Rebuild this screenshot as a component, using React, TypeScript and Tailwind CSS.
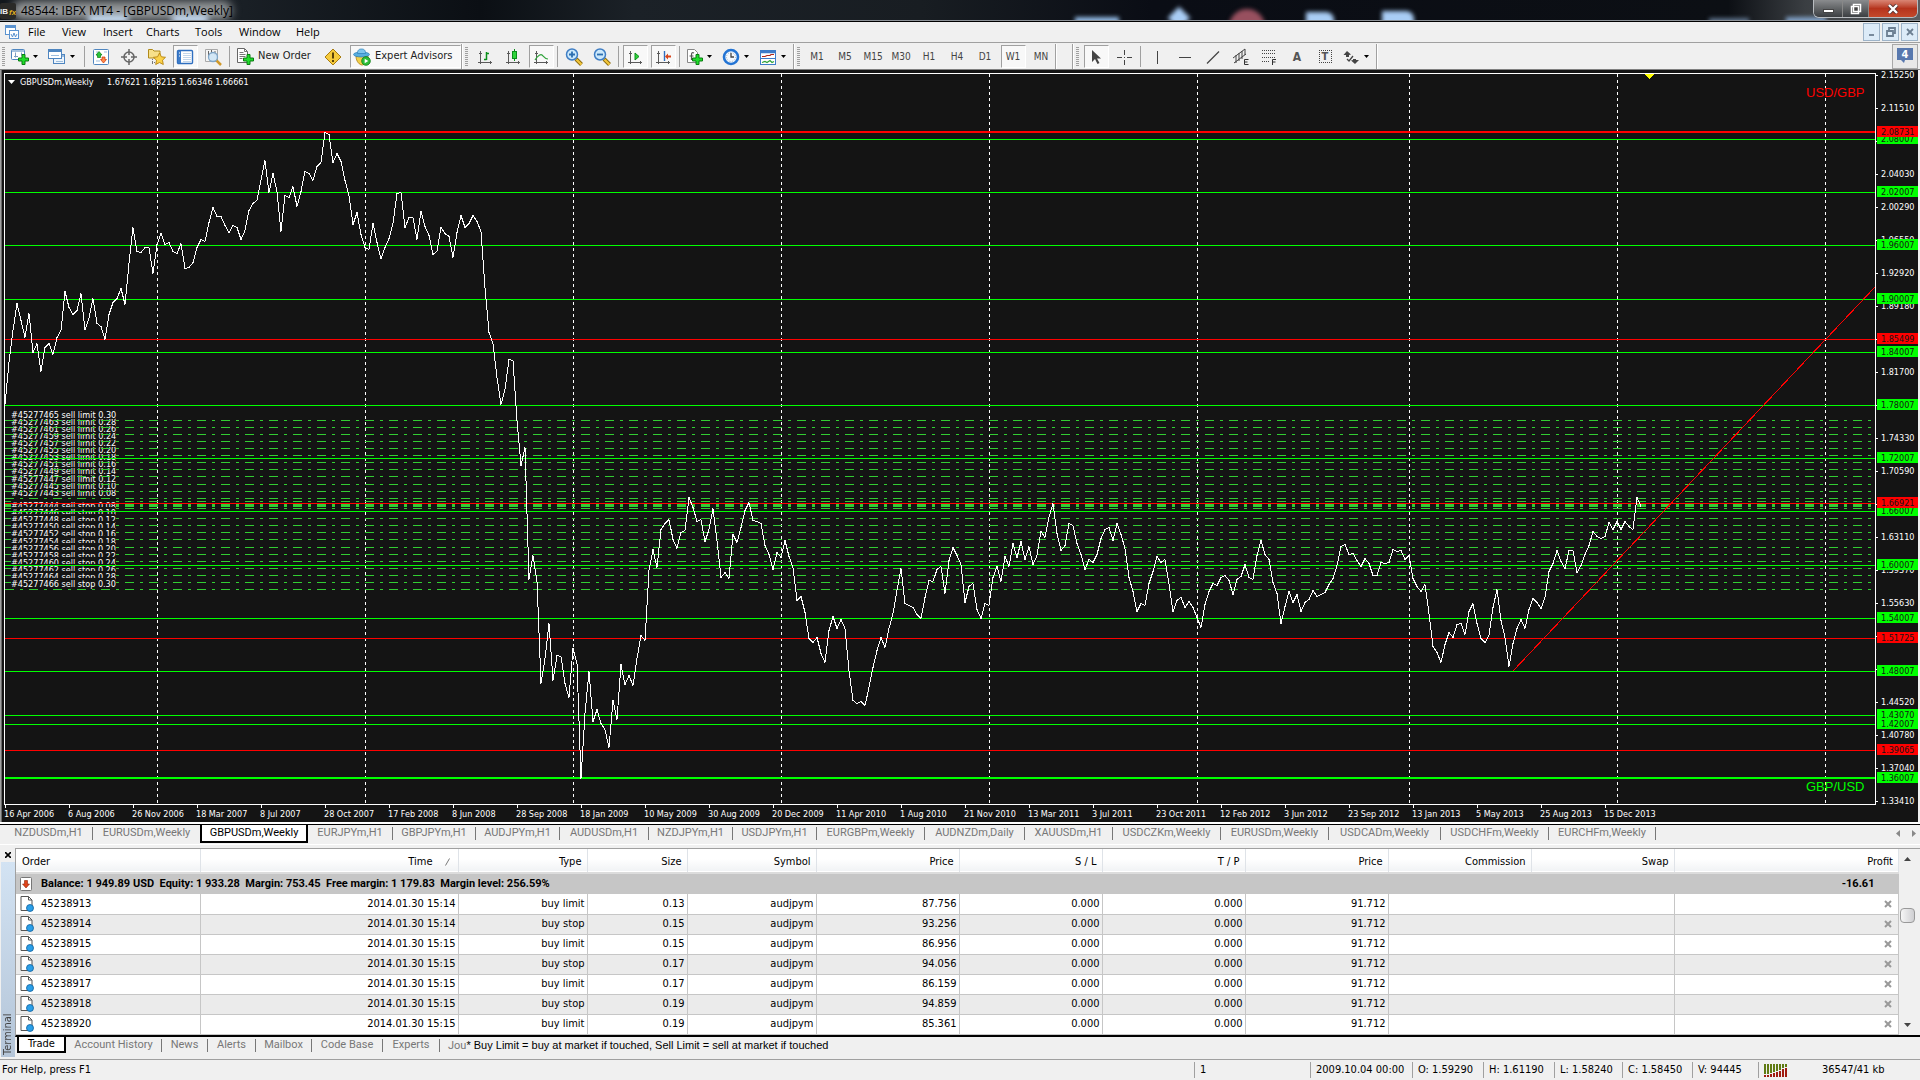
import type { ReactNode } from 'react';

type Level = { price: string; y: number; color: 'g' | 'r'; thick?: boolean };

const LEVELS: Level[] = [
  { price: '2.08007', y: 139, color: 'g' },
  { price: '2.08731', y: 132, color: 'r', thick: true },
  { price: '2.02007', y: 192, color: 'g' },
  { price: '1.96007', y: 245, color: 'g' },
  { price: '1.90007', y: 299, color: 'g' },
  { price: '1.84007', y: 352, color: 'g' },
  { price: '1.85499', y: 339, color: 'r' },
  { price: '1.78007', y: 405, color: 'g' },
  { price: '1.72007', y: 458, color: 'g' },
  { price: '1.66007', y: 511, color: 'g' },
  { price: '1.66921', y: 503, color: 'r' },
  { price: '1.60007', y: 565, color: 'g' },
  { price: '1.54007', y: 618, color: 'g' },
  { price: '1.51725', y: 638, color: 'r' },
  { price: '1.48007', y: 671, color: 'g' },
  { price: '1.42007', y: 724, color: 'g' },
  { price: '1.43070', y: 715, color: 'g' },
  { price: '1.39065', y: 750, color: 'r' },
  { price: '1.36007', y: 778, color: 'g', thick: true },
];

const SCALE: [string, number][] = [
  ['2.15250', 75], ['2.11510', 108], ['2.07770', 141], ['2.04030', 174], ['2.00290', 207],
  ['1.96550', 240], ['1.92920', 273], ['1.89180', 306], ['1.85440', 339], ['1.81700', 372],
  ['1.78060', 405], ['1.74330', 438], ['1.70590', 471], ['1.66850', 504], ['1.63110', 537],
  ['1.59370', 570], ['1.55630', 603], ['1.51890', 636], ['1.48150', 669], ['1.44520', 702],
  ['1.40780', 735], ['1.37040', 768], ['1.33410', 801],
];

// scale labels completely hidden under a level tag
const HIDDEN = ['2.07770', '1.85440', '1.78060', '1.66850', '1.51890', '1.48150'];

const DATES = [
  '16 Apr 2006', '6 Aug 2006', '26 Nov 2006', '18 Mar 2007', '8 Jul 2007', '28 Oct 2007', '17 Feb 2008',
  '8 Jun 2008', '28 Sep 2008', '18 Jan 2009', '10 May 2009', '30 Aug 2009', '20 Dec 2009', '11 Apr 2010',
  '1 Aug 2010', '21 Nov 2010', '13 Mar 2011', '3 Jul 2011', '23 Oct 2011', '12 Feb 2012', '3 Jun 2012',
  '23 Sep 2012', '13 Jan 2013', '5 May 2013', '25 Aug 2013', '15 Dec 2013',
];

const YEAR_LINES = [157, 365, 573, 781, 989, 1197, 1409, 1617, 1825];

// limits are painted bottom-up and stops top-down, so each label hides part of the one before
const ORDERS: [string, number][] = [
  ['#45277443 sell limit 0.08', 498],
  ['#45277445 sell limit 0.10', 491],
  ['#45277447 sell limit 0.12', 484],
  ['#45277449 sell limit 0.14', 476],
  ['#45277451 sell limit 0.16', 469],
  ['#45277453 sell limit 0.18', 462],
  ['#45277455 sell limit 0.20', 455],
  ['#45277457 sell limit 0.22', 448],
  ['#45277459 sell limit 0.24', 441],
  ['#45277461 sell limit 0.26', 434],
  ['#45277463 sell limit 0.28', 427],
  ['#45277465 sell limit 0.30', 420],
  ['#45277444 sell stop 0.08', 511],
  ['#45277446 sell stop 0.10', 518],
  ['#45277448 sell stop 0.12', 525],
  ['#45277450 sell stop 0.14', 532],
  ['#45277452 sell stop 0.16', 539],
  ['#45277454 sell stop 0.18', 547],
  ['#45277456 sell stop 0.20', 554],
  ['#45277458 sell stop 0.22', 561],
  ['#45277460 sell stop 0.24', 568],
  ['#45277462 sell stop 0.26', 575],
  ['#45277464 sell stop 0.28', 582],
  ['#45277466 sell stop 0.30', 589],
];

// one close per week, 4px apart
const CLOSES = [
  404, 362, 330, 303, 320, 337, 313, 352, 343, 371, 347, 343, 354, 337, 330, 291, 307, 314, 310, 293,
  329, 318, 298, 323, 326, 339, 314, 302, 298, 288, 304, 263, 227, 251, 252, 247, 247, 273, 244, 233,
  244, 242, 251, 253, 243, 268, 267, 262, 247, 239, 241, 222, 207, 216, 216, 225, 232, 225, 227, 239,
  230, 210, 203, 200, 180, 160, 192, 173, 191, 231, 195, 197, 186, 206, 191, 171, 173, 180, 166, 162,
  132, 134, 162, 153, 161, 180, 195, 224, 212, 234, 247, 249, 223, 242, 258, 247, 238, 223, 193, 192,
  227, 217, 217, 239, 211, 226, 235, 254, 251, 227, 233, 236, 257, 232, 215, 227, 223, 215, 221, 231,
  287, 332, 343, 377, 404, 389, 359, 360, 420, 465, 447, 579, 555, 581, 683, 658, 623, 680, 655, 656,
  683, 697, 648, 663, 778, 713, 671, 721, 709, 723, 729, 747, 700, 719, 664, 684, 675, 685, 658, 635,
  640, 570, 549, 567, 529, 523, 519, 539, 548, 532, 530, 497, 507, 521, 519, 541, 529, 508, 540, 577,
  572, 578, 534, 542, 527, 510, 502, 520, 521, 523, 545, 554, 569, 552, 557, 540, 556, 567, 600, 596,
  612, 638, 642, 637, 653, 662, 630, 616, 628, 619, 628, 670, 700, 703, 701, 705, 687, 667, 650, 637,
  647, 628, 613, 590, 568, 603, 605, 607, 614, 618, 597, 580, 581, 569, 566, 593, 560, 547, 555, 564,
  602, 586, 583, 609, 618, 603, 605, 577, 566, 581, 556, 566, 543, 557, 541, 559, 546, 564, 555, 531,
  537, 517, 503, 533, 550, 545, 523, 525, 543, 554, 569, 559, 562, 554, 538, 529, 527, 540, 523, 534,
  548, 577, 591, 611, 603, 605, 583, 571, 556, 562, 559, 583, 611, 600, 597, 607, 601, 607, 617, 627,
  604, 591, 583, 585, 577, 575, 580, 594, 579, 576, 564, 577, 579, 555, 540, 554, 559, 582, 593, 623,
  606, 591, 602, 594, 611, 602, 599, 590, 596, 594, 592, 584, 578, 565, 546, 544, 554, 553, 560, 566,
  558, 563, 575, 575, 562, 563, 562, 549, 551, 550, 559, 555, 578, 586, 591, 584, 613, 646, 652, 662,
  644, 632, 637, 624, 623, 634, 611, 603, 623, 638, 642, 635, 607, 589, 620, 637, 666, 643, 628, 619,
  628, 609, 598, 602, 608, 597, 571, 563, 550, 561, 568, 550, 550, 572, 565, 554, 545, 531, 536, 538,
  536, 522, 529, 521, 529, 521, 526, 529, 497, 506,
];

const CHART_TABS = [
  { label: 'NZDUSDm,H1', w: 'w-[88px]' },
  { label: 'EURUSDm,Weekly', w: 'w-[107px]' },
  { label: 'GBPUSDm,Weekly', w: 'w-[108px]' },
  { label: 'EURJPYm,H1', w: 'w-[85px]' },
  { label: 'GBPJPYm,H1', w: 'w-[83px]' },
  { label: 'AUDJPYm,H1', w: 'w-[84px]' },
  { label: 'AUDUSDm,H1', w: 'w-[89px]' },
  { label: 'NZDJPYm,H1', w: 'w-[84px]' },
  { label: 'USDJPYm,H1', w: 'w-[84px]' },
  { label: 'EURGBPm,Weekly', w: 'w-[108px]' },
  { label: 'AUDNZDm,Daily', w: 'w-[100px]' },
  { label: 'XAUUSDm,H1', w: 'w-[88px]' },
  { label: 'USDCZKm,Weekly', w: 'w-[108px]' },
  { label: 'EURUSDm,Weekly', w: 'w-[108px]' },
  { label: 'USDCADm,Weekly', w: 'w-[112px]' },
  { label: 'USDCHFm,Weekly', w: 'w-[108px]' },
  { label: 'EURCHFm,Weekly', w: 'w-[107px]' },
];

const TERMINAL_TABS = [
  { label: 'Account History', w: 'w-[96px]' },
  { label: 'News', w: 'w-[46px]' },
  { label: 'Alerts', w: 'w-[48px]' },
  { label: 'Mailbox', w: 'w-[56px]' },
  { label: 'Code Base', w: 'w-[71px]' },
  { label: 'Experts', w: 'w-[57px]' },
];

const COLUMNS = [
  { label: 'Order', w: 'w-[184px]' },
  { label: 'Time', w: 'w-[258px]' },
  { label: 'Type', w: 'w-[129px]' },
  { label: 'Size', w: 'w-[100px]' },
  { label: 'Symbol', w: 'w-[129px]' },
  { label: 'Price', w: 'w-[143px]' },
  { label: 'S / L', w: 'w-[143px]' },
  { label: 'T / P', w: 'w-[143px]' },
  { label: 'Price', w: 'w-[143px]' },
  { label: 'Commission', w: 'w-[143px]' },
  { label: 'Swap', w: 'w-[143px]' },
  { label: 'Profit', w: '' },
];

const ROWS = [
  ['45238913', '2014.01.30 15:14', 'buy limit', '0.13', '87.756'],
  ['45238914', '2014.01.30 15:14', 'buy stop', '0.15', '93.256'],
  ['45238915', '2014.01.30 15:15', 'buy limit', '0.15', '86.956'],
  ['45238916', '2014.01.30 15:15', 'buy stop', '0.17', '94.056'],
  ['45238917', '2014.01.30 15:15', 'buy limit', '0.17', '86.159'],
  ['45238918', '2014.01.30 15:15', 'buy stop', '0.19', '94.859'],
  ['45238920', '2014.01.30 15:15', 'buy limit', '0.19', '85.361'],
];

const STATUS = [
  { label: '1', w: 'w-[116px]' },
  { label: '2009.10.04 00:00', w: 'w-[102px]' },
  { label: 'O: 1.59290', w: 'w-[71px]' },
  { label: 'H: 1.61190', w: 'w-[71px]' },
  { label: 'L: 1.58240', w: 'w-[68px]' },
  { label: 'C: 1.58450', w: 'w-[70px]' },
  { label: 'V: 94445', w: 'w-[66px]' },
];

/* ── Toolbar parts ─────────────────────────────────────────── */

function Grip() {
  return (
    <span className="mr-[3px] ml-[2px] h-5 w-[3px] shrink-0 bg-[repeating-linear-gradient(to_bottom,#a0a0a0_0_1px,#f0f0f0_1px_2px)]" />
  );
}

function Sep() {
  return <span className="mx-[2px] h-[21px] w-px shrink-0 bg-[#a0a0a0]" />;
}

function BarEnd() {
  return <span className="h-full w-[2px] shrink-0 border-l border-[#a0a0a0] bg-white" />;
}

const PRESSED = 'border-t-[#a0a0a0] border-l-[#a0a0a0] border-r-white border-b-white bg-[#f8f8f8]';

function Tool({ label, children, pressed }: { label: string; children: ReactNode; pressed?: boolean }) {
  return (
    <button type="button" aria-label={label} className="flex h-[23px] w-7 shrink-0 items-center justify-center">
      <span className={`flex h-[23px] w-[25px] items-center justify-center border ${pressed ? PRESSED : 'border-transparent'}`}>
        {children}
      </span>
    </button>
  );
}

function DropTool({ label, children }: { label: string; children: ReactNode }) {
  return (
    <button type="button" aria-label={label} className="flex h-[23px] w-[37px] shrink-0 items-center gap-1 pl-[3px]">
      {children}
      <Caret />
    </button>
  );
}

function Caret() {
  return <svg width="5" height="3" className="shrink-0"><path d="M0 0h5L2.5 3z" fill="#000" /></svg>;
}

function Icon({ children }: { children: ReactNode }) {
  return <svg width="18" height="18" viewBox="0 0 18 18" fill="none" className="shrink-0">{children}</svg>;
}

const Plus = () => (
  <path transform="translate(7 6)" d="M4 .5h3V4h3.500v3H7v3.500H4V7H.5V4H4z" fill="#1fdc2b" stroke="#0a7d12" />
);

const Axes = () => (
  <g stroke="#5a5a5a">
    <path d="M4.500 3v13M2 14.500h14" />
    <path d="M3 5.500h3M14.500 13v3" />
  </g>
);

function Glass({ minus }: { minus?: boolean }) {
  return (
    <Icon>
      <path d="M11 11l5.500 5.500" stroke="#8a6a10" strokeWidth="4" />
      <path d="M11.500 11.500l5 5" stroke="#f3c73c" strokeWidth="2.200" />
      <circle cx="7" cy="6.500" r="5.500" fill="#cbe8fb" stroke="#3f7ec4" strokeWidth="1.500" />
      <path d={minus ? 'M4 6.500h6' : 'M4 6.500h6M7 3.500v6'} stroke="#2d6fb0" strokeWidth="1.800" />
    </Icon>
  );
}

function Toolbar() {
  return (
    <div className="flex h-[27px] items-center border-b border-[#808080] bg-[#f0f0f0] text-[11px] text-[#222]">
      <div className="flex h-full items-center pt-px">
        <Grip />
        <DropTool label="New chart">
          <Icon>
            <rect x=".5" y="1.500" width="13" height="10" rx="1" fill="#fff" stroke="#4f86c0" />
            <path d="M1 3h12" stroke="#4f86c0" />
            <path d="M4.500 4.500v5M3 8.500h4M10.500 4.500v3" stroke="#7b9cc0" />
            <Plus />
          </Icon>
        </DropTool>
        <DropTool label="Profiles">
          <Icon>
            <rect x="5.500" y="6.500" width="11" height="9" fill="#eef5fc" stroke="#4f86c0" />
            <path d="M6 8h10" stroke="#4f86c0" />
            <path d="M8 13.500h7" stroke="#9dbddd" />
            <rect x=".5" y="1.500" width="13" height="9" fill="#fff" stroke="#4f86c0" />
            <path d="M1 3h12" stroke="#4f86c0" strokeWidth="2" />
            <path d="M3 7.500h8" stroke="#9dbddd" />
          </Icon>
        </DropTool>
        <Sep />
        <Tool label="Market Watch">
          <Icon>
            <rect x="1.500" y="1.500" width="15" height="15" rx="1" fill="#fff" stroke="#4f86c0" />
            <path d="M4 4h2M4 7h1M4 13h4M12 4h3" stroke="#9dbddd" />
            <path d="M7 3.500l3 3.500H8.500v2.500h-3V7H4z" fill="#27c43a" stroke="#0a7d12" strokeWidth=".7" />
            <path d="M11.500 15l3-3.500H13V9h-3v2.500H8.500z" fill="#ff8a4a" stroke="#c8320a" strokeWidth=".7" />
          </Icon>
        </Tool>
        <Tool label="Data Window">
          <Icon>
            <circle cx="9" cy="9" r="5" stroke="#666" strokeWidth="1.500" />
            <path d="M9 1v6M9 11v6M1 9h6M11 9h6" stroke="#666" strokeWidth="1.500" />
          </Icon>
        </Tool>
        <Tool label="Navigator">
          <Icon>
            <path d="M.5 3V1.500h4L6 3h6v7H.5z" fill="#f7e08a" stroke="#b08a1a" />
            <path d="M4.500 11v5M7 14.500H4" stroke="#777" strokeDasharray="1 1" />
            <path d="M11.500 5l1.900 3.800 4.100.5-3 2.900.8 4.300-3.800-2-3.800 2 .8-4.300-3-2.900 4.100-.5z" fill="#fbd24a" stroke="#b5830c" strokeWidth=".9" />
          </Icon>
        </Tool>
        <Tool label="Terminal" pressed>
          <Icon>
            <rect x="1.500" y="2.500" width="15" height="13" rx="1" fill="#fff" stroke="#2f6fc0" strokeWidth="1.400" />
            <rect x="2" y="3" width="3" height="12" fill="#3d7cc9" />
            <path d="M7 5.500h8M7 7.500h8M7 9.500h8M7 11.500h8M7 13.500h8" stroke="#c3d6ea" />
            <path d="M3 5h1M3 8h1" stroke="#fff" />
          </Icon>
        </Tool>
        <Tool label="Strategy Tester">
          <Icon>
            <path d="M1.500 1.500h12v12h-12z" fill="#f4f4f4" stroke="#a9a9a9" />
            <path d="M4.500 3v5M7.500 2v4M11 3v4" stroke="#666" />
            <path d="M12 12l5 5" stroke="#d0992a" strokeWidth="2.500" />
            <circle cx="9" cy="9" r="4.500" fill="#cfe5f6" fillOpacity=".9" stroke="#7fa6c8" strokeWidth="1.300" />
          </Icon>
        </Tool>
        <Sep />
        <button type="button" className="flex h-[23px] w-[87px] shrink-0 items-center gap-1 pl-1">
          <Icon>
            <path d="M1.500.5h7l3 3v11h-10z" fill="#fff" stroke="#666" />
            <path d="M8.500.5v3h3M3.500 4.500h4M3.500 6.500h6M3.500 8.500h6M3.500 10.500h3" stroke="#777" />
            <Plus />
          </Icon>
          <span className="whitespace-nowrap">New Order</span>
        </button>
        <Tool label="MetaEditor">
          <Icon>
            <path d="M9 1l8 8-8 8-8-8z" fill="#f6cb3c" stroke="#a97c10" />
            <path d="M9 4.500v6M9 12v2" stroke="#5a4208" strokeWidth="2" />
          </Icon>
        </Tool>
        <button type="button" className={`ml-[3px] flex h-[23px] w-[111px] shrink-0 items-center gap-1 border pl-[2px] ${PRESSED}`}>
          <Icon>
            <path d="M3 8c0 6 4 9 6 9s6-3 6-9z" fill="#f2d04a" stroke="#a97c10" strokeWidth=".8" />
            <ellipse cx="8.500" cy="6.500" rx="8" ry="2.500" fill="#58aee0" stroke="#2a7db5" strokeWidth=".7" />
            <path d="M4.500 5.500C4.500 2 6 1 8.500 1s4 1 4 4.500z" fill="#7fc6ee" stroke="#2a7db5" strokeWidth=".7" />
            <circle cx="13" cy="13" r="4.300" fill="#2fbf3a" stroke="#0a7d12" strokeWidth=".8" />
            <path d="M11.700 10.800v4.400l3.600-2.200z" fill="#fff" />
          </Icon>
          <span className="whitespace-nowrap">Expert Advisors</span>
        </button>
        <BarEnd />
      </div>

      <div className="flex h-full items-center pt-px">
        <Grip />
        <Tool label="Bar chart"><Icon><Axes /><path d="M10.500 4v8M8 11.500h2.500M10.500 5.500H13" stroke="#0a8f1a" strokeWidth="1.500" /></Icon></Tool>
        <Tool label="Candlesticks"><Icon><Axes /><path d="M10.500 1v12" stroke="#0a8f1a" /><rect x="8.500" y="3.500" width="4" height="7" fill="#2fd43a" stroke="#0a8f1a" /></Icon></Tool>
        <Tool label="Line chart" pressed><Icon><Axes /><path d="M3 12c3-5 6-6 7-5s3 4 6 4" stroke="#2fa33a" strokeWidth="1.200" /></Icon></Tool>
        <Sep />
        <Tool label="Zoom In"><Glass /></Tool>
        <Tool label="Zoom Out"><Glass minus /></Tool>
        <Sep />
        <Tool label="Auto Scroll" pressed><Icon><Axes /><path d="M9 5v7l4-3.500z" fill="#2fd43a" stroke="#0a8f1a" /></Icon></Tool>
        <Tool label="Chart Shift" pressed><Icon><Axes /><path d="M10.500 3v10" stroke="#2f6fc0" strokeWidth="1.400" /><path d="M11 8.500l3-3v2h3v2h-3v2z" fill="#d8441a" /></Icon></Tool>
        <Sep />
        <DropTool label="Indicators">
          <Icon>
            <path d="M2.500 1.500h7l3 3v10h-10z" fill="#fff" stroke="#888" />
            <path d="M9 5c-2-1-2.500 0-2.500 2v5M4.500 8h4" stroke="#555" strokeWidth="1.200" />
            <Plus />
          </Icon>
        </DropTool>
        <DropTool label="Periods">
          <Icon>
            <circle cx="9" cy="9" r="7" fill="#f4f9fe" stroke="#2374d4" strokeWidth="2.600" />
            <circle cx="9" cy="9" r="4.500" stroke="#9ab" strokeDasharray="1 1.500" />
            <path d="M9 5v4h3" stroke="#444" strokeWidth="1.300" />
          </Icon>
        </DropTool>
        <DropTool label="Templates">
          <Icon>
            <rect x="1.500" y="2.500" width="15" height="14" fill="#fff" stroke="#3d7cc9" />
            <path d="M2 4h14" stroke="#3d7cc9" strokeWidth="2.500" />
            <path d="M2 10.500h14" stroke="#3d7cc9" />
            <path d="M3 8.500h3l2-1h3l1-1h3" stroke="#b0281a" strokeWidth="1.200" />
            <path d="M3 14.500l3-1 2 1 3-2 2 2 2-1" stroke="#2fa33a" strokeWidth="1.200" />
          </Icon>
        </DropTool>
        <BarEnd />
      </div>

      <div className="flex h-full items-center pt-px text-[10px] text-[#444]">
        <Grip />
        {['M1', 'M5', 'M15', 'M30', 'H1', 'H4', 'D1', 'W1', 'MN'].map(p => (
          <Tool key={p} label={p} pressed={p === 'W1'}>{p}</Tool>
        ))}
        <BarEnd />
      </div>

      <div className="ml-[15px] flex h-full items-center pt-px">
        <BarEnd />
        <Grip />
        <Tool label="Cursor" pressed><Icon><path d="M5 2v12l3-3 2.500 5 2-1L10 10.500h4z" fill="#444" /></Icon></Tool>
        <Tool label="Crosshair"><Icon><path d="M9.500 2v5M9.500 12v5M2 9.500h5M12 9.500h5M9 9.500h1" stroke="#444" /></Icon></Tool>
        <Sep />
        <Tool label="Vertical line"><Icon><path d="M9.500 3v13" stroke="#444" /></Icon></Tool>
        <Tool label="Horizontal line"><Icon><path d="M3 9.500h12" stroke="#444" /></Icon></Tool>
        <Tool label="Trendline"><Icon><path d="M3 15.500L15 3.500" stroke="#444" strokeWidth="1.200" /></Icon></Tool>
        <Tool label="Equidistant channel">
          <Icon>
            <path d="M1 10L13 1M2 15L14 6M4 7v8M7 5v8M10 3v8M13 1v6" stroke="#444" />
            <path d="M16.500 11.500h-4v5h4M12.500 14h3" stroke="#333" />
          </Icon>
        </Tool>
        <Tool label="Fibonacci">
          <Icon>
            <path d="M2 2.500h14M2 5.500h14M2 9.500h14M2 13.500h8" stroke="#444" strokeDasharray="1 1" />
            <path d="M16 11.500h-3.500V17M12.500 14h3" stroke="#333" />
          </Icon>
        </Tool>
        <Tool label="Text"><span className="text-[12px] font-bold text-[#555]">A</span></Tool>
        <Tool label="Text label">
          <span className="flex h-[13px] w-[13px] items-center justify-center border border-dotted border-[#444] text-[11px] leading-3 font-bold text-[#555]">T</span>
        </Tool>
        <DropTool label="Arrows">
          <Icon>
            <path d="M5 3l4 3.500-2 .5v2H4V7H1.500z" fill="#444" />
            <path d="M13 16l-4-3.500 2-.5v-1h3v1h3z" fill="#444" />
            <path d="M5 11l2 2 4-5" stroke="#444" strokeWidth="1.300" />
          </Icon>
        </DropTool>
        <BarEnd />
      </div>

      <button type="button" aria-label="Messages: 4" className="mr-[2px] ml-auto flex h-[25px] w-[26px] items-center justify-center border border-[#a8a8a8] bg-[#e8e8e8]">
        <svg width="18" height="18" viewBox="0 0 18 18">
          <path d="M1 1h16v12H9l-1 3-3-3H1z" fill="#5878ae" />
          <text x="9" y="11" textAnchor="middle" fontSize="11" fontWeight="bold" fill="#fff">4</text>
        </svg>
      </button>
    </div>
  );
}

/* ── Window frame ──────────────────────────────────────────── */

function TitleBar() {
  return (
    <header className="relative flex h-[22px] items-start overflow-hidden border-b border-black bg-[linear-gradient(to_right,#12171c_0%,#1a2026_12%,#0b0f14_25%,#1b2127_33%,#181d22_48%,#0a0d15_60%,#0c0f14_90%,#3a3e42_94%,#5a5d60_100%)]">
      <div className="absolute top-[1px] left-3 h-[19px] w-[220px] rounded-full bg-[#95989a] blur-[5px]" />
      <div className="absolute top-[15px] left-[88px] h-2 w-10 bg-[#cfe6ff] blur-[3px]" />
      <div className="absolute top-[15px] left-[172px] h-2 w-9 bg-[#cfe6ff] blur-[3px]" />
      <div className="absolute top-[17px] left-[56%] h-2 w-11 bg-[#8fb6e0] blur-[2px]" />
      <div className="absolute top-[10px] left-[61%] h-4 w-4 rotate-45 bg-[#a9cdf5] blur-[2px]" />
      <div className="absolute top-[9px] left-[64%] h-9 w-9 rounded-full bg-[#98505f] blur-[2px]" />
      <div className="absolute top-[12px] left-[68%] h-4 w-7 rounded-tr-lg bg-[#a9cdf5] blur-[2px]" />
      <div className="absolute top-[11px] left-[72%] h-4 w-8 rounded-tr-lg bg-[#a9cdf5] blur-[2px]" />
      <div className="absolute top-[18px] left-[89%] h-2 w-10 bg-[#5c7088] blur-[2px]" />
      <div className="absolute top-[17px] left-[93%] h-2 w-10 bg-[#7f9fc4] blur-[2px]" />
      <div className="absolute inset-x-0 bottom-0 h-px bg-[#8d9298]" />
      <div className="relative flex h-full w-full items-start">
        <svg width="16" height="16" viewBox="0 0 16 16" className="mt-[3px] shrink-0" fontFamily="'Liberation Sans', sans-serif">
          <rect width="16" height="16" rx="2" fill="#2a2a28" />
          <text x="0" y="11" fontSize="8" fontWeight="bold" fill="#eee">IB</text>
          <text x="9" y="12" fontSize="8" fontStyle="italic" fontWeight="bold" fill="#e0b020">fx</text>
        </svg>
        <h1 className="ml-[5px] font-['Open_Sans',sans-serif] text-[12px] leading-[21px] whitespace-nowrap text-black">
          48544: IBFX MT4 - [GBPUSDm,Weekly]
        </h1>
        <div className="mr-[2px] ml-auto flex h-[18px] overflow-hidden rounded-b-md border border-t-0 border-[#b8bcc0]">
          <button type="button" aria-label="Minimize" className="flex w-[29px] items-end justify-center border-r border-[#888] bg-linear-to-b from-[#8a8c8e] to-[#3c3f42] pb-1">
            <span className="h-[4px] w-[11px] border border-[#444] bg-white" />
          </button>
          <button type="button" aria-label="Restore" className="flex w-[26px] items-center justify-center border-r border-[#888] bg-linear-to-b from-[#8a8c8e] to-[#3c3f42]">
            <svg width="12" height="12" viewBox="0 0 12 12"><path d="M3.500 1.500h7v7h-7zM1.500 3.500h7v7h-7z" fill="#444" stroke="#fff" strokeWidth="1.500" /></svg>
          </button>
          <button type="button" aria-label="Close" className="flex w-[48px] items-center justify-center bg-linear-to-b from-[#d98574] via-[#b5331c] to-[#c4492a]">
            <svg width="12" height="10" viewBox="0 0 12 10"><path d="M2 1l8 8M10 1L2 9" stroke="#533" strokeWidth="4" /><path d="M2 1l8 8M10 1L2 9" stroke="#fff" strokeWidth="2.400" /></svg>
          </button>
        </div>
      </div>
    </header>
  );
}

function MenuBar() {
  return (
    <nav className="flex h-[21px] items-center border-b border-[#a0a0a0] bg-[#f0f0f0] pl-[5px] font-['Open_Sans',sans-serif] text-[11px] text-black">
      <svg width="14" height="14" viewBox="0 0 14 14" fill="none" className="shrink-0">
        <rect x=".5" y=".5" width="10" height="9" fill="#fff" stroke="#5b93d0" />
        <path d="M1 2h9" stroke="#5b93d0" strokeWidth="2" />
        <rect x="4.500" y="5.500" width="9" height="8" fill="#fff" stroke="#5b93d0" />
        <path d="M6 9l1.500 3L9 8l1.500 4L12 9" stroke="#5b93d0" />
      </svg>
      <ul className="ml-[9px] flex">
        {[
          { label: 'File', w: 'w-[34px]' },
          { label: 'View', w: 'w-[41px]' },
          { label: 'Insert', w: 'w-[43px]' },
          { label: 'Charts', w: 'w-[49px]' },
          { label: 'Tools', w: 'w-[44px]' },
          { label: 'Window', w: 'w-[57px]' },
          { label: 'Help', w: 'w-[40px]' },
        ].map(m => (
          <li key={m.label} className={m.w}><button type="button">{m.label}</button></li>
        ))}
      </ul>
      <div className="mr-[2px] ml-auto flex gap-[2px]">
        {[
          { label: 'Minimize chart', d: 'M2 8h5' },
          { label: 'Restore chart', d: 'M3 3V1h6v5H7M1 4h6v5H1z' },
          { label: 'Close chart', d: 'M2 2l6 6M8 2L2 8' },
        ].map(b => (
          <button key={b.label} type="button" aria-label={b.label} className="flex h-[18px] w-[17px] items-center justify-center border border-[#9db3c8] bg-[#dcebf8]">
            <svg width="10" height="10" viewBox="0 0 10 10" fill="none"><path d={b.d} stroke="#6c7f92" strokeWidth="1.800" /></svg>
          </button>
        ))}
      </div>
    </nav>
  );
}

/* ── Chart ─────────────────────────────────────────────────── */

const HEX = { g: '#00ff00', r: '#ff0000' };
const DASH = '9 6 3 6';

function Chart() {
  const points = CLOSES.map((y, i) => `${5 + i * 4},${y + 0.5}`).join(' ');
  return (
    <div className="border-b-2 border-white bg-[#141414]">
      <svg viewBox="0 70 1920 752" className="block h-auto w-full" fontFamily="'DejaVu Sans Condensed', 'DejaVu Sans', sans-serif" fontSize="9">
        <rect x="0" y="70" width="1920" height="752" fill="#141414" />
        <rect x="0" y="70" width="1" height="752" fill="#a0a0a0" />
        <rect x="1" y="70" width="1" height="752" fill="#696969" />
        <rect x="1918" y="70" width="2" height="752" fill="#f0f0f0" />

        <g shapeRendering="crispEdges">
          {YEAR_LINES.map(x => (
            <path key={x} d={`M${x + 0.5} 74V804`} stroke="#fff" strokeDasharray="3 3" />
          ))}
          {[501, 508].map(y => <path key={y} d={`M5 ${y + 0.5}H1875`} stroke="#32cd32" strokeDasharray={DASH} />)}
          <path d="M5 505.500H1875" stroke="#32cd32" strokeWidth="3" strokeDasharray={DASH} />
        </g>

        {ORDERS.map(([label, y]) => (
          <g key={label}>
            {y !== 511 && (
              <path d={`M5 ${y + 0.5}H1875`} stroke="#32cd32" strokeDasharray={DASH} shapeRendering="crispEdges" />
            )}
            <rect x="11" y={y - 11} width="104" height="10" fill="#141414" />
            <text x="11" y={y - 2} fill="#fff">{label}</text>
          </g>
        ))}

        <g shapeRendering="crispEdges">
          {LEVELS.map(l => (
            <rect key={l.price} x="5" y={l.thick ? l.y - 1 : l.y} width="1870" height={l.thick ? 2 : 1} fill={HEX[l.color]} />
          ))}
          <path d="M1513 671L1875 287" stroke="#ff0000" />
          <polyline points={points} fill="none" stroke="#fff" />
          <path d="M4.500 804V73.500H1875.500V804.500H4" fill="none" stroke="#fff" />
          <path d="M1645 74h9l-4.500 5z" fill="#ffff00" />
        </g>

        <path d="M8 80h7l-3.500 4z" fill="#fff" />
        <text x="20" y="85" fill="#fff">GBPUSDm,Weekly</text>
        <text x="107" y="85" fill="#fff">1.67621 1.68215 1.66346 1.66661</text>
        <g fontFamily="'Liberation Sans', sans-serif" fontSize="13">
          <text x="1806" y="97" fill="#ff0000">USD/GBP</text>
          <text x="1806" y="791" fill="#00ff00">GBP/USD</text>
        </g>

        {SCALE.map(([p, y]) => (
          <g key={p}>
            <rect x="1876" y={y} width="2" height="1" fill="#fff" />
            {!HIDDEN.includes(p) && <text x="1881" y={y + 3} fill="#fff">{p}</text>}
          </g>
        ))}
        {LEVELS.map(l => (
          <g key={l.price}>
            <rect x="1877" y={l.y - 6} width="41" height="11" fill={HEX[l.color]} />
            <text x="1881" y={l.y + 3} fill="#141414">{l.price}</text>
          </g>
        ))}
        {DATES.map((d, i) => (
          <g key={d}>
            <rect x={5 + i * 64} y="805" width="1" height="3" fill="#fff" />
            <text x={4 + i * 64} y="817" fill="#fff">{d}</text>
          </g>
        ))}
      </svg>
    </div>
  );
}

function ChartTabs() {
  return (
    <div className="flex h-[21px] items-start border-t border-b border-t-black border-b-white pl-[5px] font-['Roboto',sans-serif] text-[11px] text-[#777]">
      {CHART_TABS.map((t, i) => {
        const active = i === 2;
        return (
          <button
            key={i}
            type="button"
            className={`flex shrink-0 items-center justify-center whitespace-nowrap ${t.w} ${active ? 'h-[18px] border-x-2 border-b-2 border-black bg-white text-black' : 'h-[17px]'}`}
          >
            <span className={`flex h-[13px] w-full items-center justify-center ${active || i === 1 ? '' : 'border-r border-[#777]'}`}>{t.label}</span>
          </button>
        );
      })}
      <div className="mt-[5px] mr-1 ml-auto flex gap-3">
        <svg width="4" height="7"><path d="M4 0v7L0 3.500z" fill="#888" /></svg>
        <svg width="4" height="7"><path d="M0 0v7l4-3.500z" fill="#888" /></svg>
      </div>
    </div>
  );
}

/* ── Terminal ──────────────────────────────────────────────── */

function OrderIcon() {
  return (
    <svg width="14" height="16" viewBox="0 0 14 16" className="shrink-0">
      <path d="M1 .5h7.500L12 4v10.500H1z" fill="#fff" stroke="#555" />
      <path d="M8.500.5V4H12" fill="none" stroke="#555" />
      <circle cx="10" cy="12" r="3.500" fill="#2a9fe8" stroke="#0f5f9c" strokeWidth=".8" />
    </svg>
  );
}

function OrdersTable() {
  return (
    <table className="w-full table-fixed border-collapse">
      <thead>
        <tr className="h-6 border-b-2 border-[#dcdcdc] bg-linear-to-b from-white from-45% to-[#f1f3f5]">
          {COLUMNS.map((c, i) => (
            <th key={i} scope="col" className={`border-r border-[#dfe3e8] pt-[2px] font-normal ${c.w} ${i === 0 ? 'pl-[6px] text-left' : 'pr-[5px] text-right'}`}>
              {c.label}
              {c.label === 'Time' && (
                <svg width="8" height="8" viewBox="0 0 8 8" className="ml-3 inline-block"><path d="M.5 7.500L4.500.5" stroke="#777" /></svg>
              )}
            </th>
          ))}
        </tr>
      </thead>
      <tbody>
        <tr className="h-[21px] bg-[#c6c6c6] font-['Roboto',sans-serif] font-bold">
          <td colSpan={11}>
            <div className="flex items-center gap-[9px] pl-1 whitespace-pre">
              <svg width="12" height="14" viewBox="0 0 12 14" className="shrink-0">
                <rect x=".5" y=".5" width="11" height="13" rx="1" fill="#fff" stroke="#777" />
                <path d="M4.500 3.500h3V7h2L6 11 2.500 7h2z" fill="#e0441a" stroke="#8f2206" strokeWidth=".6" />
              </svg>
              {'Balance: 1 949.89 USD  Equity: 1 933.28  Margin: 753.45  Free margin: 1 179.83  Margin level: 256.59%'}
            </div>
          </td>
          <td className="pr-6 text-right">-16.61</td>
        </tr>
        {ROWS.map(([order, time, type, size, price]) => (
          <tr key={order} className="h-5 border-b border-[#c6c6c6] even:bg-white odd:bg-[#ebebeb] [&>td]:border-r [&>td]:border-[#c6c6c6] [&>td]:pr-[2px] [&>td]:text-right">
            <td>
              <div className="flex items-center gap-[7px] pl-1"><OrderIcon />{order}</div>
            </td>
            <td>{time}</td>
            <td>{type}</td>
            <td>{size}</td>
            <td>audjpym</td>
            <td>{price}</td>
            <td>0.000</td>
            <td>0.000</td>
            <td>91.712</td>
            <td colSpan={2} />
            <td>
              <button type="button" aria-label={`Delete ${order}`} className="mr-1 ml-auto block w-2">
                <svg width="8" height="8" viewBox="0 0 8 8"><path d="M1 1l6 6M7 1L1 7" stroke="#999" strokeWidth="2" /></svg>
              </button>
            </td>
          </tr>
        ))}
      </tbody>
    </table>
  );
}

function Terminal() {
  return (
    <section className="mt-[3px] flex text-[11px] leading-[14px] text-black">
      <div className="flex w-[15px] shrink-0 flex-col items-center">
        <button type="button" aria-label="Close terminal" className="flex h-[14px] items-center">
          <svg width="6" height="6" viewBox="0 0 6 6"><path d="M0 0l6 6M6 0L0 6" stroke="#000" strokeWidth="1.600" /></svg>
        </button>
        <div className="flex w-[14px] grow items-end bg-linear-to-b from-[#d3e3f3] to-[#b4c5d8] pb-[2px]">
          <span className="h-12 rotate-180 whitespace-nowrap text-[#444] [writing-mode:vertical-rl]">Terminal</span>
        </div>
      </div>
      <div className="min-w-0 grow">
        <div className="flex border-t border-l border-b-2 border-t-[#a0a0a0] border-l-[#a0a0a0] border-b-black">
          <div className="min-w-0 grow bg-white">
            <OrdersTable />
          </div>
          <div className="flex w-4 shrink-0 flex-col items-center bg-[#f0f0f0] py-2">
            <svg width="7" height="4"><path d="M0 4h7L3.500 0z" fill="#444" /></svg>
            <span className="mt-[47px] h-[15px] w-[15px] rounded-sm border border-[#999] bg-linear-to-r from-[#f6f6f6] to-[#cfcfd2]" />
            <svg width="7" height="4" className="mt-auto"><path d="M0 0h7L3.500 4z" fill="#444" /></svg>
          </div>
          <div className="w-[5px] shrink-0" />
        </div>
        <div className="flex h-5 items-start font-['Roboto',sans-serif] text-[#777]">
          <button type="button" className="ml-[2px] flex h-4 w-[49px] items-center justify-center border-x-2 border-b-2 border-black bg-white font-['DejaVu_Sans_Condensed',sans-serif] text-black">Trade</button>
          {TERMINAL_TABS.map(t => (
            <button key={t.label} type="button" className={`mt-[2px] flex h-[13px] items-center justify-center border-r border-[#777] whitespace-nowrap ${t.w}`}>{t.label}</button>
          ))}
          <span className="mt-[2px] ml-2 leading-[13px]">Jou</span>
          <span className="mt-[2px] font-['Liberation_Sans',sans-serif] leading-[13px] whitespace-nowrap text-black">
            * Buy Limit = buy at market if touched, Sell Limit = sell at market if touched
          </span>
        </div>
      </div>
    </section>
  );
}

function StatusBar() {
  return (
    <footer className="mt-[2px] flex h-[22px] items-center border-t border-[#a0a0a0] text-[11px] text-black">
      <p className="grow pl-[2px]">For Help, press F1</p>
      {STATUS.map(s => (
        <span key={s.label} className={`h-4 shrink-0 border-l border-[#a0a0a0] pl-[5px] leading-4 whitespace-nowrap ${s.w}`}>{s.label}</span>
      ))}
      <div className="flex h-4 w-[162px] shrink-0 items-center border-l border-[#a0a0a0] pl-[5px]">
        <svg width="24" height="13" viewBox="0 0 24 13" shapeRendering="crispEdges">
          {[10, 10, 9, 8, 7, 6, 4, 3].map((h, i) => (
            <g key={i}>
              <rect x={i * 3} y="0" width="2" height={h} fill="#5f7a12" />
              <rect x={i * 3} y={h + 1} width="2" height={12 - h} fill="#a01c10" />
            </g>
          ))}
        </svg>
        <span className="ml-[34px]">36547/41 kb</span>
      </div>
    </footer>
  );
}

export default function App() {
  return (
    <main className="flex min-h-screen flex-col bg-[#f0f0f0] font-['DejaVu_Sans_Condensed','DejaVu_Sans',sans-serif]">
      <TitleBar />
      <MenuBar />
      <Toolbar />
      <Chart />
      <ChartTabs />
      <Terminal />
      <StatusBar />
    </main>
  );
}
